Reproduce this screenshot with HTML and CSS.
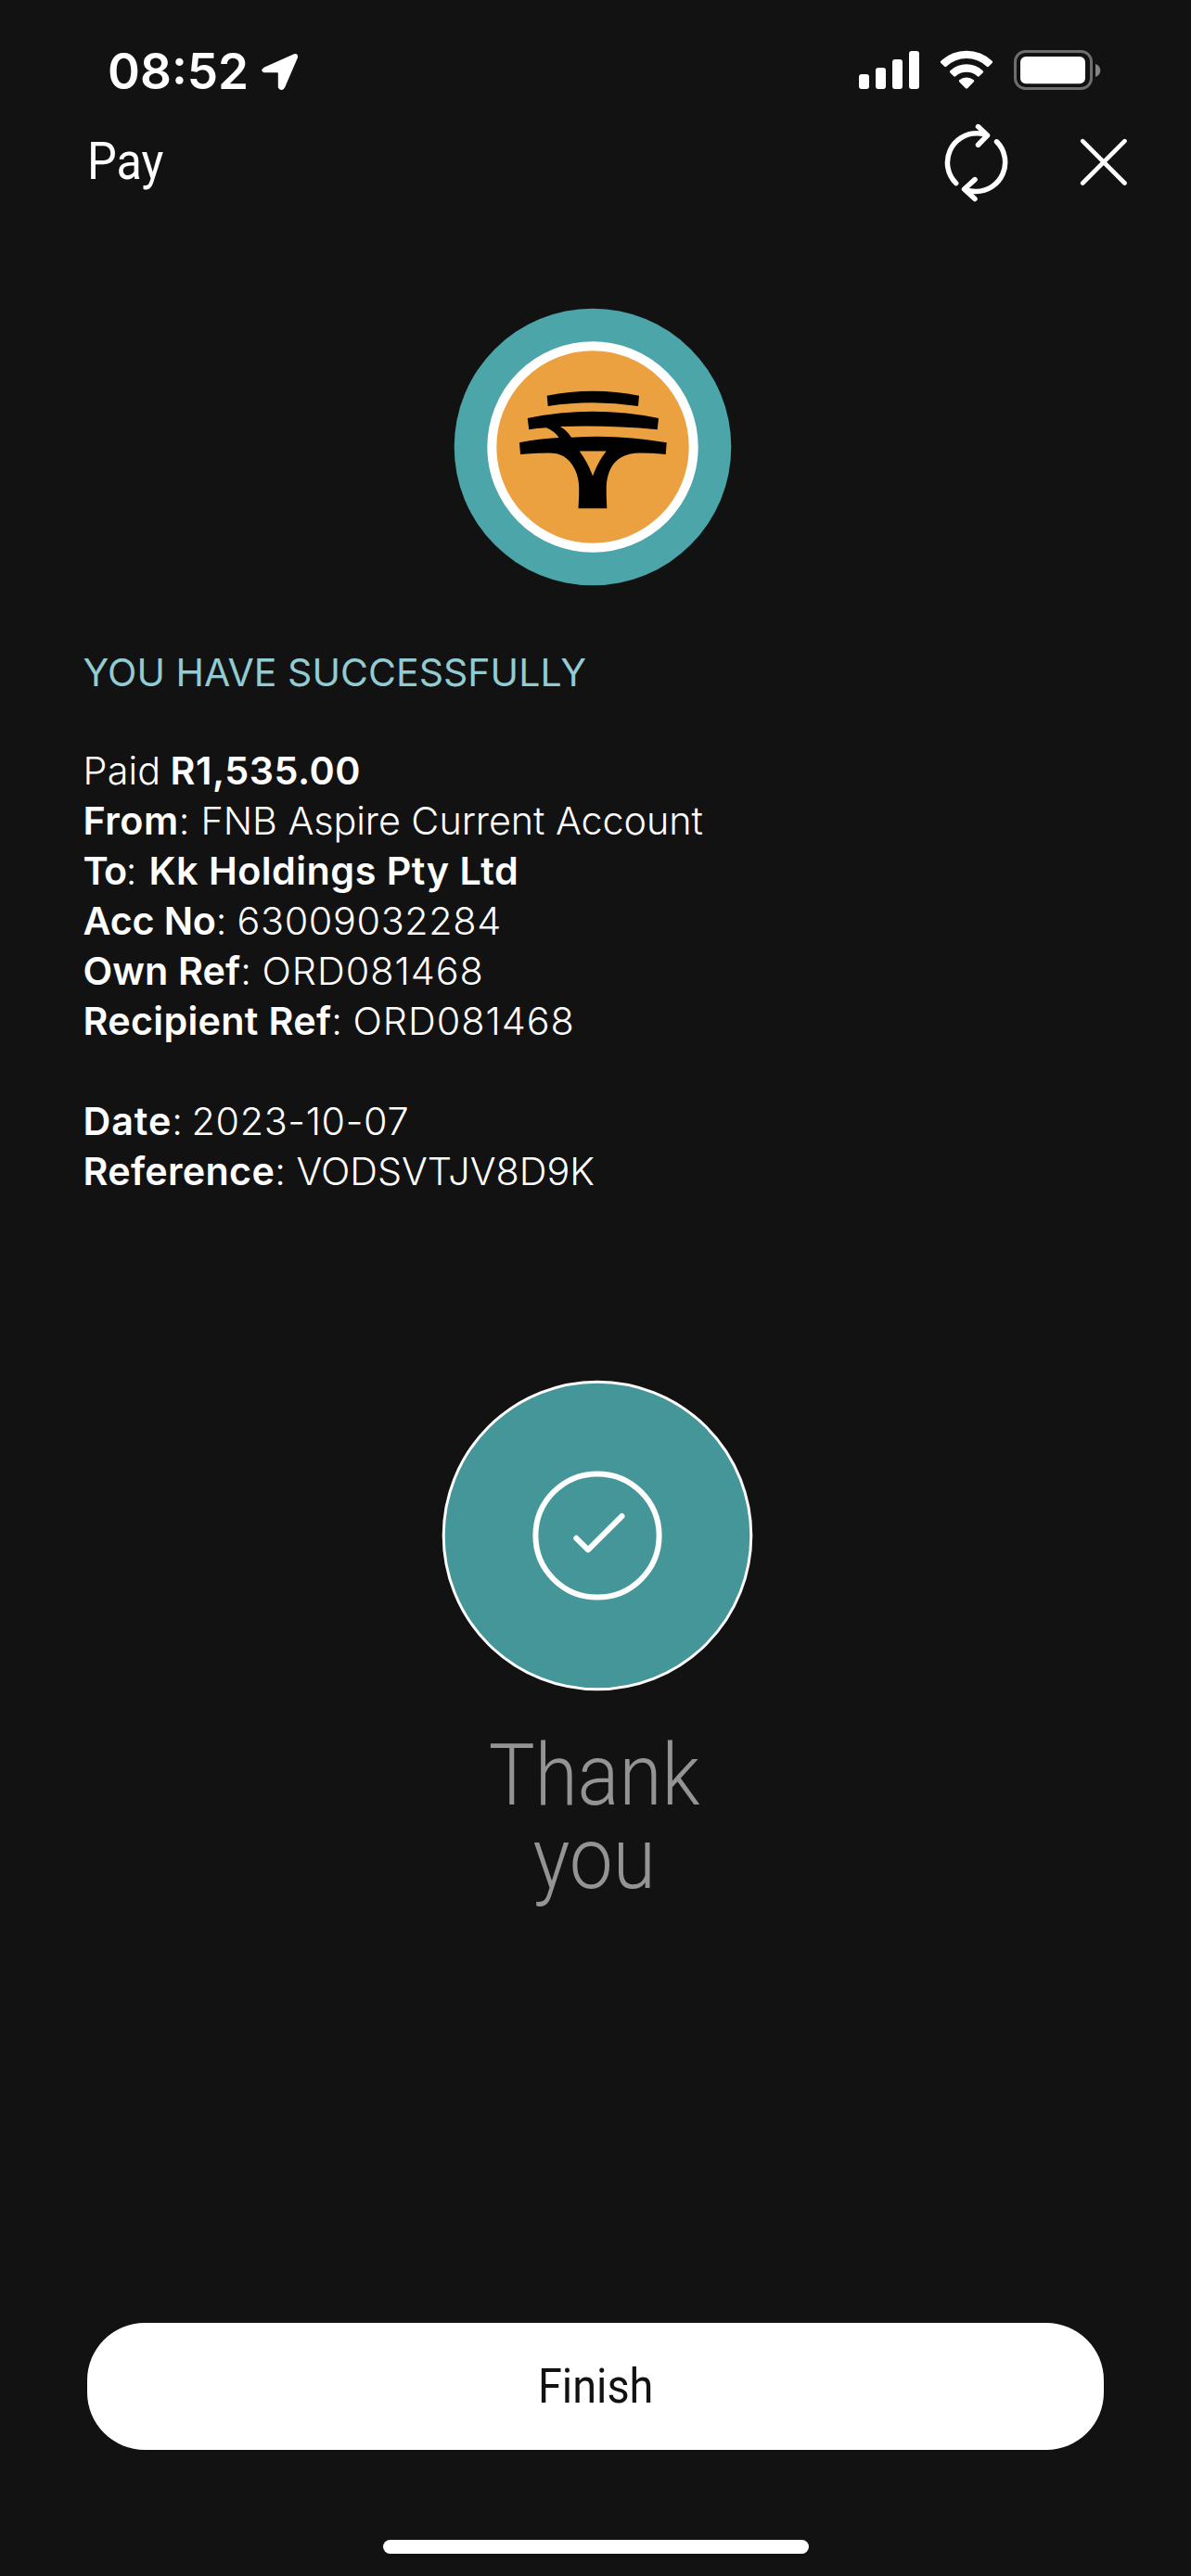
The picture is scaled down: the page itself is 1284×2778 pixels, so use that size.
FILE: index.html
```html
<!DOCTYPE html>
<html lang="en">
<head>
<meta charset="utf-8">
<title>Pay</title>
<link rel="stylesheet" href="styles.css">
</head>
<body>
<div class="screen">
  <div class="status">
    <span class="time">08:52</span>
    <svg class="location" width="44" height="44" viewBox="0 0 44 44"><path d="M5 17.5 37 3.2Q41.500 2.500 41 7L27 39.500Q23.500 44.500 19.800 39.500V24Q19.800 23.200 19 23.200H4.500Q-.5 21 5 17.500Z" fill="#fff"/></svg>
    <div class="status-icons">
      <svg width="66" height="44" viewBox="0 0 66 44" fill="#fff"><rect x="0" y="26" width="11" height="16" rx="3"/><rect x="18" y="19" width="11" height="23" rx="3"/><rect x="36" y="10" width="11" height="32" rx="3"/><rect x="54" y="1" width="11" height="41" rx="3"/></svg>
      <svg class="wifi" width="58" height="44" viewBox="0 0 58 44" fill="#fff"><path d="M1.400 11.800Q.300 12.900 1.400 14L5.200 17.800Q6.200 18.600 7.200 17.700A31.500 31.500 0 0 1 50.800 17.700Q51.800 18.600 52.800 17.800L56.600 14Q57.700 12.900 56.600 11.800A40 40 0 0 0 1.400 11.800Z"/><path d="M11.400 22.200Q10.300 23.300 11.400 24.400L15.300 28.300Q16.200 29 17.200 28.200A18 18 0 0 1 40.800 28.200Q41.800 29 42.700 28.300L46.600 24.400Q47.700 23.300 46.600 22.200A26 26 0 0 0 11.400 22.200Z"/><path d="M21.200 32.300Q20.200 33.300 21.200 34.300L28 41.200Q29 42 30 41.200L36.800 34.300Q37.800 33.300 36.800 32.300A12.500 12.500 0 0 0 21.200 32.300Z"/></svg>
      <svg class="battery" width="94" height="44" viewBox="0 0 94 44"><rect x="1.500" y="1.500" width="82" height="40" rx="11" fill="none" stroke="#6e6e6e" stroke-width="3"/><rect x="7" y="7" width="70" height="29.300" rx="6" fill="#fff"/><path d="M88 15Q93.300 17 93.300 22T88 29Z" fill="#848484"/></svg>
    </div>
  </div>
  <div class="header">
    <h1 class="title"><span class="narrow-left">Pay</span></h1>
    <div class="actions">
      <svg width="70" height="86" viewBox="0 0 70 86" fill="none" stroke="#fff" stroke-width="5.500" stroke-linecap="round" stroke-linejoin="round"><path d="M12.700 65.600A31.500 31.500 0 0 1 36 11.800Q41 11.800 45.500 13.500M36.500 4.600 46.500 14 36.500 24.200"/><path d="M56.500 20.800A31.500 31.500 0 0 1 34 74.500Q27.500 74.500 22.500 72.500M33 61.600 21.500 72 33 82.500"/></svg>
      <svg class="close" width="52" height="52" viewBox="0 0 52 52" stroke="#fff" stroke-width="4.600" stroke-linecap="round"><path d="M3.200 3.200 48.500 48.500M48.500 3.200 3.200 48.500"/></svg>
    </div>
  </div>
  <svg class="brand" width="300" height="300" viewBox="0 0 300 300">
    <circle cx="150" cy="150" r="149.300" fill="#4ba5a9"/>
    <circle cx="150" cy="150" r="108.700" fill="#eba140" stroke="#fff" stroke-width="10"/>
    <path d="M100.700 94.700Q150 84.700 200 94.700L199 106Q150 98.700 101.700 106Z"/>
    <path d="M79.700 119Q150 104.700 221 119L219.700 131.300Q168 126.300 115 128Q123 133 127 139.700Q178 136 229.700 145.300L228.700 158Q208 156.300 195 156.700C174 159 165.500 174 164.700 193V202L165.300 216.300H134.500L135.200 202V193C134.500 174 124 157.500 107 156.700Q98 156.300 72 158L71 145.300Q93 141 113.500 140Q109 133 100 129.300Q89 130 81.300 131.300Z"/>
    <path d="M135.700 154.500H164.700Q155.500 166 150 181.500Q145.500 168 135.700 154.500Z" fill="#eba140"/>
  </svg>
  <div class="details">
    <h2 class="heading">YOU HAVE SUCCESSFULLY</h2>
    <div class="row paid"><span>Paid</span><b class="amount">R1,535.00</b></div>
    <div class="row from"><span><b>From</b>:</span><span>FNB Aspire Current Account</span></div>
    <div class="row to"><span><b>To</b>:</span><b>Kk Holdings Pty Ltd</b></div>
    <div class="row account"><span><b>Acc No</b>:</span><span>63009032284</span></div>
    <div class="row own"><span><b>Own Ref</b>:</span><span>ORD081468</span></div>
    <div class="row recipient"><span><b>Recipient Ref</b>:</span><span>ORD081468</span></div>
    <div class="row date"><span><b>Date</b>:</span><span>2023-10-07</span></div>
    <div class="row reference"><span><b>Reference</b>:</span><span>VODSVTJV8D9K</span></div>
  </div>
  <svg class="success" width="336" height="336" viewBox="0 0 336 336" fill="none" stroke="#fff">
    <circle cx="168" cy="168" r="165.800" fill="#449698" stroke-width="3"/>
    <circle cx="168" cy="168" r="66.600" stroke-width="6"/>
    <path d="M145.300 170.800 158 183.300 194.500 147" stroke-width="6" stroke-linecap="round" stroke-linejoin="round"/>
  </svg>
  <p class="thanks">Thank<br>you</p>
  <button class="finish"><span class="narrow">Finish</span></button>
  <div class="home"></div>
</div>
</body>
</html>
```
FILE: styles.css
```css
* { box-sizing: border-box; }
body { margin: 0; background: #121212; }
svg { display: block; flex: none; }
.screen {
  width: 1284px;
  height: 2778px;
  display: flex;
  flex-direction: column;
  align-items: center;
  overflow: hidden;
  color: #fff;
  font-family: Inter, "Liberation Sans", sans-serif;
}
.status {
  width: 100%;
  height: 108px;
  margin-top: 23px;
  padding-left: 116px;
  padding-right: 97px;
  display: flex;
  align-items: center;
}
.time { font-size: 53px; font-weight: 600; line-height: 64px; }
.location { margin-left: 12px; }
.status-icons { margin-left: auto; display: flex; align-items: center; padding-bottom: 3px; }
.wifi { margin-left: 21px; }
.battery { margin-left: 22px; }
.header {
  width: 100%;
  height: 90px;
  padding: 0 68px 0 94px;
  display: flex;
  align-items: center;
  justify-content: space-between;
}
.title {
  margin: 0;
  padding-bottom: 4px;
  font: 400 56px/66px Roboto, sans-serif;
}
.narrow, .narrow-left { display: inline-block; transform: scaleX(.9); }
.narrow-left { transform-origin: left; }
.actions { display: flex; align-items: center; gap: 76px; padding-bottom: 2px; }
.brand { margin-top: 111px; margin-right: 7px; }
.details {
  width: 100%;
  margin-top: 66px;
  padding-left: 89.5px;
  font-size: 41.3px;
  font-weight: 330;
  line-height: 54px;
}
.heading {
  margin: 0 0 52px;
  color: #92cbd1;
  font-size: 41px;
  font-weight: 400;
  letter-spacing: .04px;
}
.row { display: grid; white-space: nowrap; letter-spacing: .2px; }
.row b { font-weight: 600; letter-spacing: .3px; }
.row .amount { letter-spacing: .5px; }
.paid { grid-template-columns: 94px auto; }
.from { grid-template-columns: 127px auto; letter-spacing: -.05px; }
.from b { letter-spacing: .5px; }
.to { grid-template-columns: 71px auto; }
.to span b { letter-spacing: -1.5px; }
.to > b { letter-spacing: .48px; }
.account { grid-template-columns: 166px auto; letter-spacing: .65px; }
.account b { letter-spacing: -.2px; }
.own { grid-template-columns: 193px auto; letter-spacing: 1px; }
.own b { letter-spacing: .1px; }
.recipient { grid-template-columns: 291px auto; letter-spacing: 1px; }
.date { grid-template-columns: 117px auto; margin-top: 54px; letter-spacing: .65px; }
.date b { letter-spacing: .9px; }
.reference { grid-template-columns: 230px auto; letter-spacing: 0; }
.success { margin-top: 198px; margin-left: 3px; }
.thanks {
  margin: 46px 2px 0 0;
  color: #949494;
  font: 330 93px/90px Roboto, sans-serif;
  text-align: center;
  transform: scaleX(.9);
}
.finish {
  width: 1096px;
  height: 137px;
  margin-top: auto;
  border: 0;
  border-radius: 62px;
  background: #fff;
  color: #121212;
  font: 400 52px/60px Roboto, sans-serif;
}
.home {
  width: 459px;
  height: 15px;
  margin: 97px 0 24px;
  flex: none;
  border-radius: 8px;
  background: #fff;
}
```
